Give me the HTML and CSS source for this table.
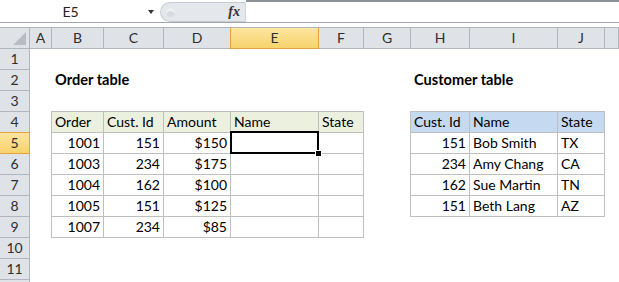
FILE: index.html
```html
<!DOCTYPE html>
<html lang="en">

<head>
    <meta charset="UTF-8">
    <title>Order table</title>
    <link rel="stylesheet" href="styles.css">
</head>

<body>
    <div class="formula-bar">
        <div class="name-box"><span class="name-text">E5</span><span class="name-arrow"></span></div>
        <div class="fx-box"><span class="fx-knob"></span><span class="fx">fx</span></div>
        <div class="formula-input"></div>
    </div>
    <div class="bar-gap"></div>

    <div class="sheet">
        <div class="row col-heads">
            <div class="head corner"></div>
            <div class="head">A</div>
            <div class="head">B</div>
            <div class="head">C</div>
            <div class="head">D</div>
            <div class="head on">E</div>
            <div class="head">F</div>
            <div class="head">G</div>
            <div class="head">H</div>
            <div class="head">I</div>
            <div class="head">J</div>
            <div class="head"></div>
        </div>

        <div class="row">
            <div class="head">1</div>
            <div></div><div></div><div></div><div></div><div></div><div></div><div></div><div></div><div></div><div></div><div></div>
        </div>

        <div class="row">
            <div class="head">2</div>
            <div></div>
            <div class="title">Order table</div>
            <div></div><div></div><div></div><div></div><div></div>
            <div class="title">Customer table</div>
            <div></div><div></div><div></div>
        </div>

        <div class="row">
            <div class="head">3</div>
            <div></div><div></div><div></div><div></div><div></div><div></div><div></div><div></div><div></div><div></div><div></div>
        </div>

        <div class="row">
            <div class="head">4</div>
            <div></div>
            <div class="tbl tbl-head tbl-first green">Order</div>
            <div class="tbl tbl-head green">Cust. Id</div>
            <div class="tbl tbl-head green">Amount</div>
            <div class="tbl tbl-head green">Name</div>
            <div class="tbl tbl-head green">State</div>
            <div></div>
            <div class="tbl tbl-head tbl-first blue">Cust. Id</div>
            <div class="tbl tbl-head blue">Name</div>
            <div class="tbl tbl-head blue">State</div>
            <div></div>
        </div>

        <div class="row">
            <div class="head on-row">5</div>
            <div></div>
            <div class="tbl tbl-first num">1001</div>
            <div class="tbl num">151</div>
            <div class="tbl num">$150</div>
            <div class="tbl selected"></div>
            <div class="tbl"></div>
            <div></div>
            <div class="tbl tbl-first num">151</div>
            <div class="tbl">Bob Smith</div>
            <div class="tbl">TX</div>
            <div></div>
        </div>

        <div class="row">
            <div class="head">6</div>
            <div></div>
            <div class="tbl tbl-first num">1003</div>
            <div class="tbl num">234</div>
            <div class="tbl num">$175</div>
            <div class="tbl"></div>
            <div class="tbl"></div>
            <div></div>
            <div class="tbl tbl-first num">234</div>
            <div class="tbl">Amy Chang</div>
            <div class="tbl">CA</div>
            <div></div>
        </div>

        <div class="row">
            <div class="head">7</div>
            <div></div>
            <div class="tbl tbl-first num">1004</div>
            <div class="tbl num">162</div>
            <div class="tbl num">$100</div>
            <div class="tbl"></div>
            <div class="tbl"></div>
            <div></div>
            <div class="tbl tbl-first num">162</div>
            <div class="tbl">Sue Martin</div>
            <div class="tbl">TN</div>
            <div></div>
        </div>

        <div class="row">
            <div class="head">8</div>
            <div></div>
            <div class="tbl tbl-first num">1005</div>
            <div class="tbl num">151</div>
            <div class="tbl num">$125</div>
            <div class="tbl"></div>
            <div class="tbl"></div>
            <div></div>
            <div class="tbl tbl-first num">151</div>
            <div class="tbl">Beth Lang</div>
            <div class="tbl">AZ</div>
            <div></div>
        </div>

        <div class="row">
            <div class="head">9</div>
            <div></div>
            <div class="tbl tbl-first num">1007</div>
            <div class="tbl num">234</div>
            <div class="tbl num">$85</div>
            <div class="tbl"></div>
            <div class="tbl"></div>
            <div></div><div></div><div></div><div></div><div></div>
        </div>

        <div class="row">
            <div class="head">10</div>
            <div></div><div></div><div></div><div></div><div></div><div></div><div></div><div></div><div></div><div></div><div></div>
        </div>

        <div class="row">
            <div class="head">11</div>
            <div></div><div></div><div></div><div></div><div></div><div></div><div></div><div></div><div></div><div></div><div></div>
        </div>

        <!-- row 12 is only a sliver at the bottom edge -->
        <div class="row">
            <div class="head"></div>
            <div></div><div></div><div></div><div></div><div></div><div></div><div></div><div></div><div></div><div></div><div></div>
        </div>
    </div>
</body>

</html>
```

FILE: styles.css
```css
body {
    margin: 0;
    background: #fff;
    overflow: hidden;
    font-family: Lato, 'Liberation Sans', sans-serif;
    font-size: 14px;
    color: #000;
}

/* formula bar */
.formula-bar {
    display: flex;
    height: 22px;
    border-bottom: 1px solid #a3a8ae;
}

.name-box {
    width: 160px;
    display: flex;
    align-items: center;
    background: #fff;
}

.name-text {
    width: 141px;
    text-align: center;
    color: #222;
}

.name-arrow {
    width: 0;
    height: 0;
    margin-left: 7px;
    margin-top: 1px;
    border-left: 3.5px solid transparent;
    border-right: 3.5px solid transparent;
    border-top: 4px solid #333;
}

.fx-box {
    width: 84px;
    margin-top: 2px;
    height: 18px;
    display: flex;
    align-items: center;
    justify-content: space-between;
    background: #e4e7eb;
    border: 1px solid #c8ccd1;
    border-right: 1px solid #d0d3d8;
    border-radius: 11px 0 0 11px;
}

.fx-knob {
    width: 9px;
    height: 9px;
    margin-left: 5px;
    border-radius: 50%;
    background: #d8dbdf;
    box-shadow: inset 0 3px 0 #eef0f2;
}

.fx {
    font-family: 'Liberation Serif', serif;
    font-style: italic;
    font-weight: bold;
    font-size: 14px;
    color: #333;
    margin-right: 5px;
}

.formula-input {
    flex: 1;
    background: #fff;
    border-top: 2px solid #8c9097;
}

.bar-gap {
    height: 4px;
}

/* grid */
.row {
    display: grid;
    grid-template-columns: 30px 22px 52px 60px 67px 88px 45px 47px 59px 88px 47px 14px;
    height: 21px;
}

.row > div {
    box-sizing: border-box;
    line-height: 20px;
    padding: 0 3px;
    white-space: nowrap;
}

.col-heads {
    border-top: 1px solid #b1b6bc;
}

.row > .head {
    padding: 0;
    text-align: center;
    color: #2e2e2e;
    background: #dfe3e8;
    border-right: 1px solid #b1b6bc;
    border-bottom: 1px solid #b1b6bc;
}

.col-heads > .head {
    line-height: 19px;
}

.row > .head.on,
.row > .head.on-row {
    background: linear-gradient(#fce5a0, #f8d36c);
    border-color: #e6a23c;
}

.head.on {
    box-shadow: -1px 0 0 #e6a23c;
}

.head.on-row {
    box-shadow: 0 -1px 0 #e6a23c;
}

.corner {
    position: relative;
}

.corner::after {
    content: '';
    position: absolute;
    right: 3px;
    bottom: 3px;
    width: 0;
    height: 0;
    border-left: 13px solid transparent;
    border-bottom: 13px solid #b9bdc2;
}

.title {
    font-weight: bold;
    font-size: 14.6px;
}

/* tables */
.row > .tbl {
    border-right: 1px solid #bfbfbf;
    border-bottom: 1px solid #bfbfbf;
}

.tbl-first {
    box-shadow: -1px 0 0 #bfbfbf;
}

.tbl-head {
    box-shadow: 0 -1px 0 #bfbfbf;
}

.tbl-head.tbl-first {
    box-shadow: -1px 0 0 #bfbfbf, 0 -1px 0 #bfbfbf, -1px -1px 0 #bfbfbf;
}

.green {
    background: #ebf1de;
}

.blue {
    background: #c5d9f1;
}

.num {
    text-align: right;
}

.selected {
    position: relative;
}

.selected::after {
    content: '';
    position: absolute;
    left: -1px;
    top: -2px;
    right: -1px;
    bottom: -1px;
    border: 2px solid #000;
    z-index: 1;
}

.selected::before {
    content: '';
    position: absolute;
    right: -4px;
    bottom: -4px;
    width: 5px;
    height: 5px;
    background: #000;
    border: 1px solid #fff;
    z-index: 2;
}
```
